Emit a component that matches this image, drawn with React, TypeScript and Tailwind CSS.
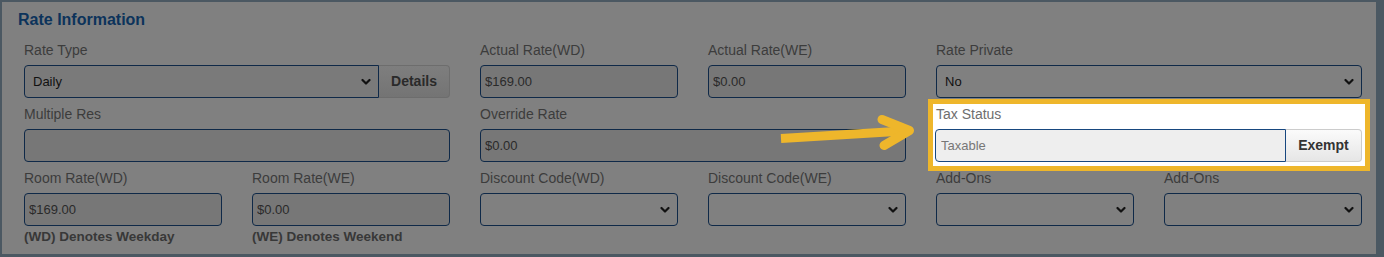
import React from 'react';

const font = { fontFamily: '"Liberation Sans", Arial, Helvetica, sans-serif' };

function Chevron({ className = 'text-[#111]' }: { className?: string }) {
  return (
    <svg
      className={`pointer-events-none absolute right-[8px] top-1/2 -translate-y-1/2 ${className}`}
      width="10"
      height="7"
      viewBox="0 0 10 7"
      fill="none"
    >
      <path d="M1.5 1.5 L5 5 L8.5 1.5" stroke="currentColor" strokeWidth="2.2" strokeLinecap="round" strokeLinejoin="round" />
    </svg>
  );
}

function Label({ children, className = 'text-[#3c3c3c]' }: { children: React.ReactNode; className?: string }) {
  return <div className={`mt-[6px] mb-[5px] h-5 text-[14px] leading-5 ${className}`}>{children}</div>;
}

function ReadInput({ value }: { value?: string }) {
  return (
    <input
      readOnly
      value={value ?? ''}
      className="h-[33px] w-full rounded-[4px] border border-[#0f2948] bg-[#777777] px-[4px] text-[13px] text-[#2a2a2a] outline-none"
    />
  );
}

function Select({ value, dark }: { value?: string; dark?: boolean }) {
  return (
    <div className="relative">
      <select
        value={value ?? ''}
        onChange={() => {}}
        className={`h-[33px] w-full appearance-none rounded-[4px] border border-[#0f2948] px-[8px] text-[13px] text-[#111] outline-none ${
          dark ? 'bg-[#7a7a7a]' : 'bg-[#808080]'
        }`}
      >
        <option value="">{''}</option>
        {value && <option value={value}>{value}</option>}
      </select>
      <Chevron />
    </div>
  );
}

export default function App() {
  return (
    <div style={font} className="relative h-[257px] w-[1384px] bg-[#4b5862] pt-[2px] pr-[8px] pb-[3px] pl-[2px]">
      <div className="h-full bg-[#808080]">
        <h2 className="mb-[4px] px-[16px] pt-[8px] text-[16px] font-bold leading-5 text-[#0c335b]">Rate Information</h2>

        <div className="grid grid-cols-[repeat(6,198px)] gap-x-[30px] px-[22px]">
          {/* row 1 */}
          <div className="col-span-2">
            <Label>Rate Type</Label>
            <div className="flex">
              <div className="relative flex-1">
                <select
                  value="Daily"
                  onChange={() => {}}
                  className="h-[33px] w-full appearance-none rounded-l-[4px] border border-[#0f2948] bg-[#7a7a7a] px-[8px] text-[13px] text-[#111] outline-none"
                >
                  <option>Daily</option>
                </select>
                <Chevron />
              </div>
              <button className="h-[33px] w-[71px] rounded-r-[4px] border border-l-0 border-[#6d6d6d] bg-gradient-to-b from-[#7e7e7e] to-[#747474] text-[14px] font-bold text-[#2a2a2a]">
                Details
              </button>
            </div>
          </div>
          <div>
            <Label>Actual Rate(WD)</Label>
            <ReadInput value="$169.00" />
          </div>
          <div>
            <Label>Actual Rate(WE)</Label>
            <ReadInput value="$0.00" />
          </div>
          <div className="col-span-2">
            <Label>Rate Private</Label>
            <Select value="No" />
          </div>

          {/* row 2 */}
          <div className="col-span-2">
            <Label>Multiple Res</Label>
            <ReadInput />
          </div>
          <div className="col-span-2">
            <Label>Override Rate</Label>
            <ReadInput value="$0.00" />
          </div>
          <div className="relative col-span-2">
            <div className="absolute top-[1px] -right-[8px] -bottom-[9px] -left-[8px] border-[5px] border-[#eeb62b] bg-white" />
            <div className="relative">
              <Label className="text-[#6e6e6e]">Tax Status</Label>
              <div className="flex">
                <input
                  readOnly
                  placeholder="Taxable"
                  className="-ml-[1px] h-[33px] flex-1 rounded-l-[4px] border border-[#17477f] bg-[#eeeeee] px-[5px] text-[13px] text-[#777] placeholder:text-[#777] outline-none"
                />
                <button className="h-[33px] w-[76px] rounded-r-[4px] border border-l-0 border-[#cccccc] bg-gradient-to-b from-[#fbfbfb] to-[#e6e6e6] text-[14px] font-bold text-[#333]">
                  Exempt
                </button>
              </div>
            </div>
          </div>

          {/* row 3 */}
          <div>
            <Label>Room Rate(WD)</Label>
            <ReadInput value="$169.00" />
          </div>
          <div>
            <Label>Room Rate(WE)</Label>
            <ReadInput value="$0.00" />
          </div>
          <div>
            <Label>Discount Code(WD)</Label>
            <Select />
          </div>
          <div>
            <Label>Discount Code(WE)</Label>
            <Select />
          </div>
          <div>
            <Label>Add-Ons</Label>
            <Select />
          </div>
          <div>
            <Label>Add-Ons</Label>
            <Select />
          </div>

          {/* footnotes */}
          <div className="mt-[3px] text-[13.5px] font-bold leading-4 text-[#383838]">(WD) Denotes Weekday</div>
          <div className="mt-[3px] text-[13.5px] font-bold leading-4 text-[#383838]">(WE) Denotes Weekend</div>
        </div>
      </div>

      {/* annotation arrow */}
      <svg className="pointer-events-none absolute top-0 left-0" width="1384" height="257" viewBox="0 0 1384 257" fill="none">
        <path d="M781 138.5 L904 131" stroke="#eeb62b" strokeWidth="9" />
        <path d="M882 119.5 L909.5 130.5 L884 145.5" stroke="#eeb62b" strokeWidth="9" strokeLinecap="round" strokeLinejoin="round" />
      </svg>
    </div>
  );
}
